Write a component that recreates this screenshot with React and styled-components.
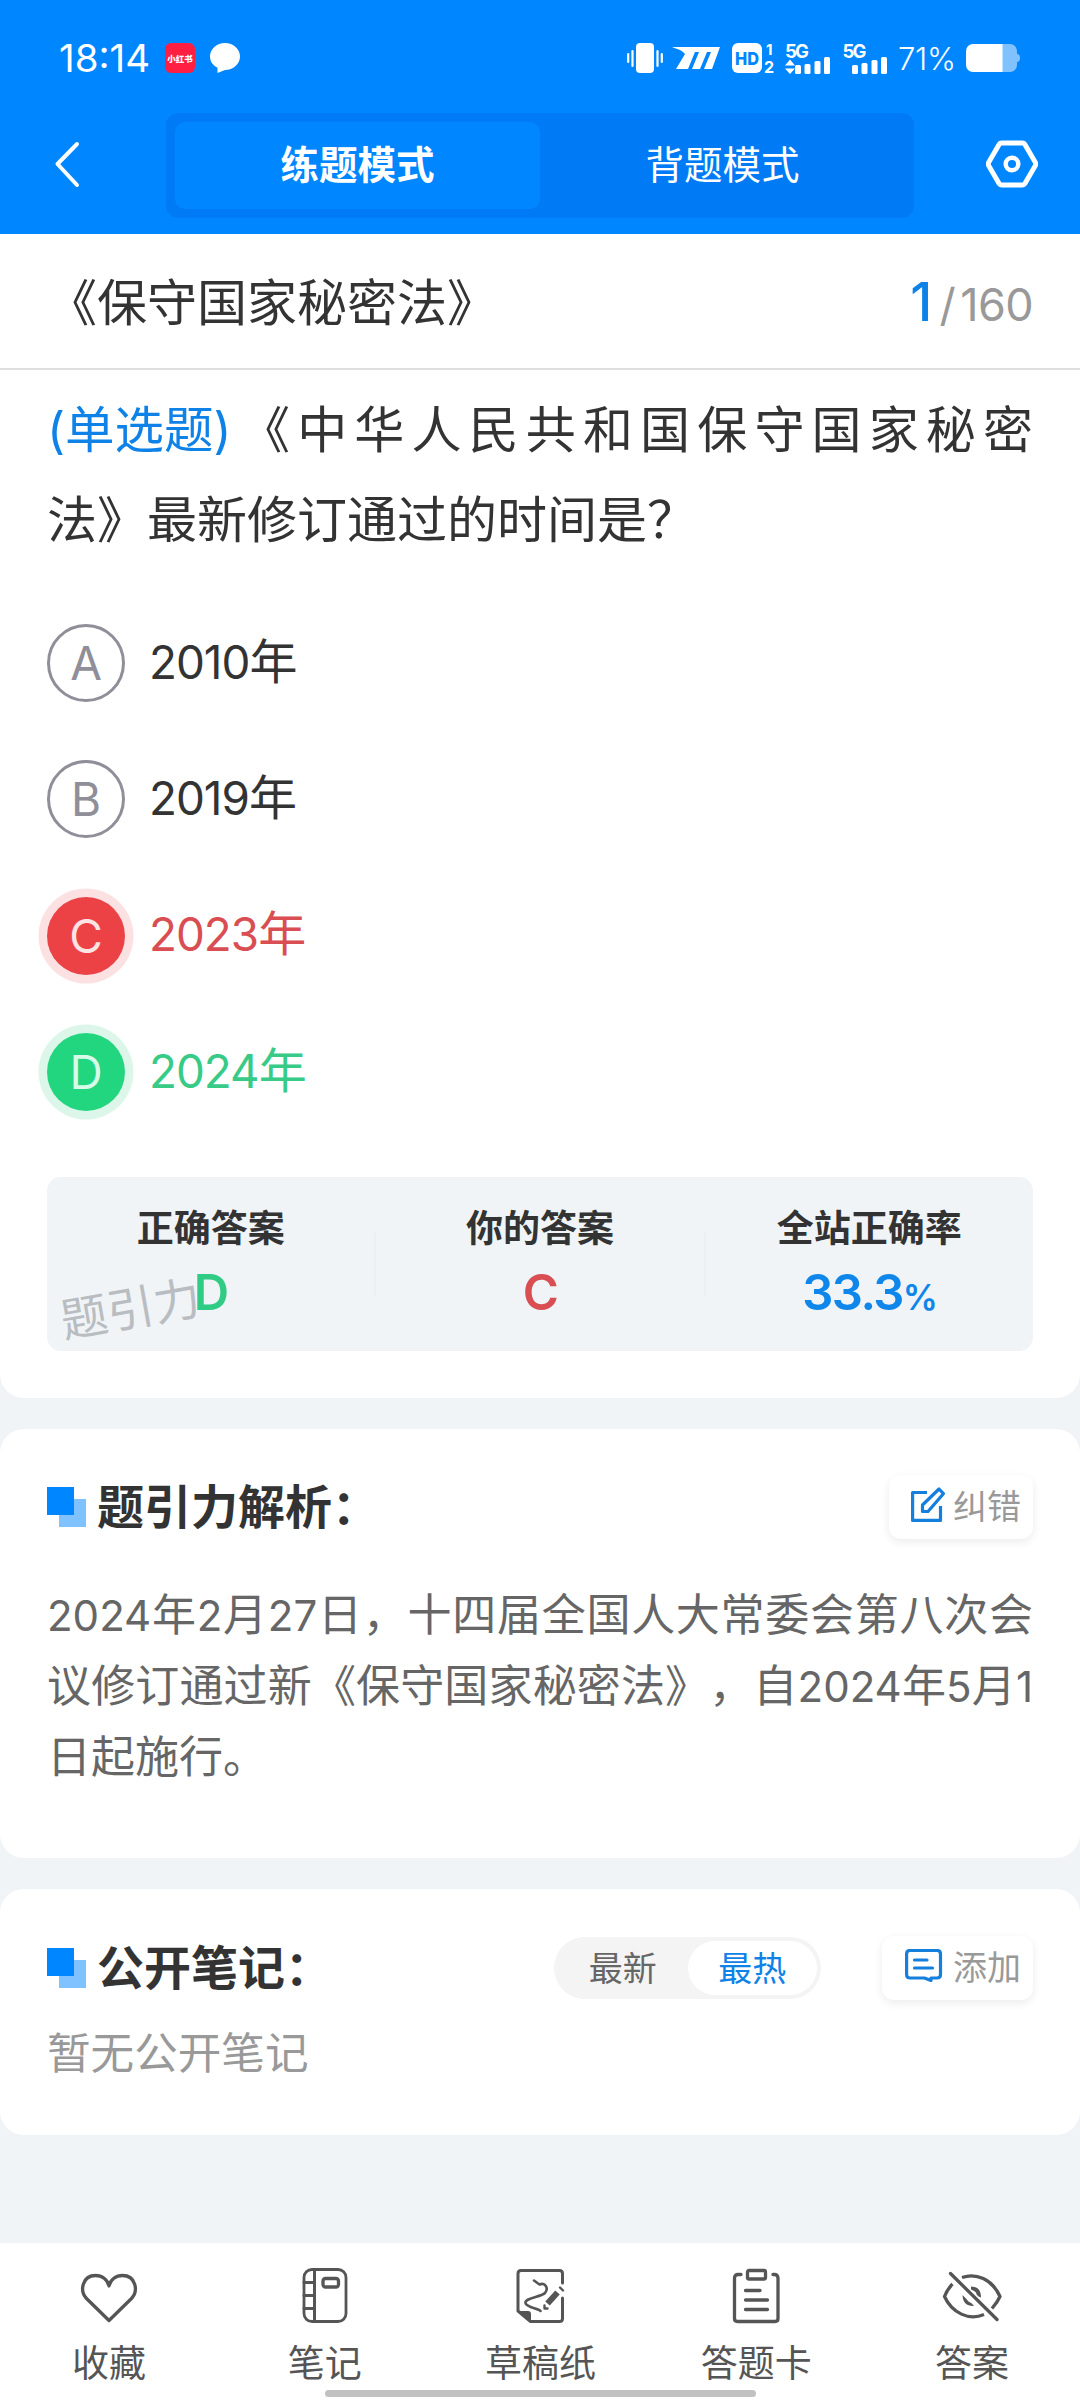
import React from "react";
import styled, { createGlobalStyle, css } from "styled-components";

const GlobalStyle = createGlobalStyle`
  * {
    box-sizing: border-box;
  }

  body {
    margin: 0;
    background: #f0f4f7;
    color: #333;
    font-family: Inter, "Noto Sans CJK SC", sans-serif;
    text-spacing-trim: space-all;
  }

  svg {
    display: block;
    flex: none;
  }
`;

const Screen = styled.div`
  width: 1080px;
  height: 2400px;
  display: flex;
  flex-direction: column;
  overflow: hidden;
`;

/* status bar */

const Header = styled.header`
  height: 234px;
  flex: none;
  background: #0086ff;
  color: white;
`;

const StatusBar = styled.div`
  height: 113px;
  padding: 3px 60px 0 59px;
  display: flex;
  align-items: center;
`;

const Clock = styled.div`
  width: 106px;
  font-size: 38.5px;
  white-space: nowrap;
`;

const AppBadge = styled.div`
  width: 30px;
  height: 30px;
  margin-right: 15px;
  border-radius: 6px;
  background: #ff1f42;
  display: flex;
  align-items: center;
  justify-content: center;
  font-size: 8.5px;
  font-weight: 900;
  white-space: nowrap;
`;

const StatusIcons = styled.div`
  margin-left: auto;
  display: flex;
  align-items: center;
`;

const BatteryText = styled.div`
  width: 78px;
  padding-left: 10px;
  font-size: 31px;
  font-weight: 300;
  letter-spacing: -0.3px;
`;

/* navigation */

const NavBar = styled.div`
  height: 105px;
  padding: 0 42px 0 50px;
  display: flex;
  align-items: center;

  > svg {
    margin-bottom: 3px;
  }
`;

const ModeSwitch = styled.div`
  width: 748px;
  height: 105px;
  margin: 0 72px 0 82px;
  padding: 9px;
  display: flex;
  border-radius: 12px;
  background: #007bf5;
`;

const Mode = styled.div`
  flex: 1;
  display: flex;
  align-items: center;
  justify-content: center;
  padding-bottom: 7px;
  border-radius: 10px;
  font-size: 38.5px;
  ${props =>
    props.$active &&
    css`
      background: #0086ff;
      font-weight: 700;
    `};
`;

/* question */

const TitleRow = styled.div`
  height: 136px;
  flex: none;
  padding: 0 47px;
  display: flex;
  align-items: center;
  justify-content: space-between;
  background: white;
  border-bottom: 2px solid #dedede;
`;

const Title = styled.h1`
  margin: 0;
  padding-bottom: 4px;
  font-size: 50px;
  font-weight: 400;
`;

const Counter = styled.div`
  padding-top: 2px;
  display: flex;
  align-items: baseline;
  color: #999;
  font-size: 45px;
  letter-spacing: -0.6px;
`;

const Current = styled.span`
  margin-right: 8px;
  color: #0f82e8;
  font-size: 53px;
  font-weight: 500;
`;

const Slash = styled.span`
  margin-right: 5px;
`;

const Card = styled.section`
  height: ${props => props.$height}px;
  flex: none;
  margin-bottom: 31px;
  padding: 0 47px;
  border-radius: ${props => (props.$first ? "0 0 24px 24px" : "24px")};
  background: white;
`;

const Question = styled.div`
  padding-top: 15px;
  font-size: 50px;
  line-height: 90px;
`;

const QuestionLine = styled.div`
  display: flex;
  white-space: nowrap;
`;

const Tag = styled.span`
  width: 193px;
  flex: none;
  color: #0f82e8;
  font-size: 49.5px;
`;

const Stretch = styled.span`
  flex: 1;
  text-align: justify;
  text-align-last: justify;
  text-justify: inter-character;
`;

const Num = styled.span`
  font-size: 0.955em;
`;

const Options = styled.div`
  padding-top: 30px;
`;

const optionColors = {
  wrong: { fill: "#ec4246", halo: "#fce1e3", text: "#d94e52", letter: "#fde3e3" },
  right: { fill: "#22d67f", halo: "#dcf7ea", text: "#38cb87", letter: "#d6fbe8" }
};

const Option = styled.div`
  height: 136.3px;
  display: flex;
  align-items: center;
  gap: 24px;
  font-size: 48px;
  color: ${props =>
    props.$state ? optionColors[props.$state].text : "#333"};
`;

const OptionLetter = styled.div`
  width: 78px;
  height: 78px;
  display: flex;
  align-items: center;
  justify-content: center;
  border-radius: 50%;
  font-size: 46px;
  border: 3px solid #8f8e99;
  color: #8f8e99;
  ${props =>
    props.$state &&
    css`
      border: none;
      background: ${optionColors[props.$state].fill};
      color: ${optionColors[props.$state].letter};
      box-shadow: 0 0 0 8.5px ${optionColors[props.$state].halo};
    `};
`;

const OptionText = styled.div`
  line-height: 70px;
  padding-bottom: 2px;
`;

const Year = styled(Num)`
  letter-spacing: -1px;
`;

/* result panel */

const Results = styled.div`
  position: relative;
  height: 174px;
  margin-top: 37px;
  display: flex;
  align-items: center;
  border-radius: 14px;
  background: #f0f4f7;
`;

const Watermark = styled.div`
  position: absolute;
  left: 13px;
  top: 97px;
  color: #b9bdc1;
  font-size: 47px;
  line-height: 70px;
  transform: rotate(-10deg);
`;

const Result = styled.div`
  position: relative;
  flex: 1;
  height: 174px;
  padding-top: 26px;
  display: flex;
  flex-direction: column;
  align-items: center;
`;

const Divider = styled.div`
  width: 2px;
  height: 64px;
  background: #ebeff3;
`;

const ResultLabel = styled.div`
  font-size: 37px;
  line-height: 52px;
  font-weight: 700;
`;

const ResultValue = styled.div`
  height: 70px;
  font-size: 49px;
  line-height: 75px;
  font-weight: 600;
  letter-spacing: -1.6px;
  color: ${props => props.$color};
`;

const Percent = styled.span`
  font-size: 35px;
`;

/* analysis and notes */

const SectionHead = styled.div`
  height: 66px;
  margin-top: ${props => props.$top}px;
  display: flex;
  align-items: center;
`;

const SectionTitle = styled.h2`
  margin: 0 auto 0 11px;
  padding-bottom: 2px;
  font-size: 47px;
  line-height: 63px;
  font-weight: 700;
`;

const SmallButton = styled.div`
  width: ${props => props.$width}px;
  height: 64px;
  padding: 0 12px 5px 0;
  display: flex;
  align-items: center;
  justify-content: flex-end;
  gap: 8px;
  border-radius: 12px;
  background: white;
  box-shadow: 0 3px 10px rgba(0, 0, 0, 0.08);
  color: #999;
  font-size: 34px;
`;

const Analysis = styled.div`
  margin-top: 40px;
  font-size: 44px;
  line-height: 70px;
  color: #666;
`;

const Line = styled.div`
  white-space: nowrap;
  ${props =>
    props.$full &&
    css`
      text-align-last: justify;
      text-justify: inter-character;
    `};
`;

const Sorter = styled.div`
  width: 267px;
  height: 62px;
  margin-right: 61px;
  padding: 4px;
  display: flex;
  border-radius: 31px;
  background: #f4f4f4;
`;

const SortTab = styled.div`
  flex: 1;
  display: flex;
  align-items: center;
  justify-content: center;
  padding-bottom: 4px;
  border-radius: 27px;
  font-size: 34px;
  background: ${props => (props.$active ? "white" : "none")};
  color: ${props => (props.$active ? "#0f82e8" : "#666")};
`;

const Empty = styled.div`
  margin-top: 20px;
  font-size: 43.6px;
  line-height: 66px;
  color: #999;
`;

/* bottom tabs */

const TabBar = styled.nav`
  position: relative;
  height: 157px;
  flex: none;
  margin-top: auto;
  padding: 22px 0 0 1px;
  display: flex;
  background: white;
`;

const Tab = styled.div`
  flex: 1;
  display: flex;
  flex-direction: column;
  align-items: center;
  color: #555;
  font-size: 37px;
  line-height: 50px;
  gap: 14px;
`;

const HomeIndicator = styled.div`
  position: absolute;
  left: 325px;
  bottom: 3px;
  width: 431px;
  height: 7px;
  border-radius: 4px;
  background: #c1c1c1;
`;

const BubbleIcon = () => (
  <svg width="30" height="30" viewBox="0 0 30 30">
    <path
      d="M15 0C6.700 0 0 6 0 13.500c0 5 3 9 7.500 11.300V30l7.500-3c8.300 0 15-6 15-13.500S23.300 0 15 0z"
      fill="white"
    />
  </svg>
);

const StatusGlyphs = () => (
  <svg width="263" height="60" viewBox="625 28 263 60" fill="white">
    <rect x="636" y="43" width="18" height="30" rx="4" />
    <path
      d="M628.200 54v8M632.500 51v15M657.500 51v15M661.800 54v8"
      stroke="white"
      strokeWidth="2.200"
      strokeLinecap="round"
    />
    <path d="M673 47h47l-8 22h-8l7-17h-4l-7 17h-8l7-17h-4l-7 17h-12l9-15c-3-4-8-5-13-7z" />
    <rect x="732" y="43" width="30" height="30" rx="6" />
    <text x="735" y="65" fontSize="18" fontWeight="800" fill="#0086ff" textLength="24" lengthAdjust="spacingAndGlyphs">
      HD
    </text>
    <text x="766" y="55" fontSize="15" fontWeight="700">
      1
    </text>
    <text x="764" y="73" fontSize="16" fontWeight="700">
      2
    </text>
    <text x="785" y="57.500" fontSize="18.500" fontWeight="700" textLength="24">
      5G
    </text>
    <path d="M790 59.500l5 6h-10zM790 74l5-5.500h-10z" />
    <rect x="795" y="65" width="6" height="9" rx="1.500" />
    <rect x="804.500" y="64" width="6" height="10" rx="1.500" />
    <rect x="814.500" y="61" width="6" height="13" rx="1.500" />
    <rect x="824" y="57" width="6" height="17" rx="1.500" />
    <text x="842.500" y="57.500" fontSize="18.500" fontWeight="700" textLength="24">
      5G
    </text>
    <rect x="852" y="65" width="6" height="9" rx="1.500" />
    <rect x="861.500" y="63" width="6" height="11" rx="1.500" />
    <rect x="871.500" y="60" width="6" height="14" rx="1.500" />
    <rect x="881" y="57" width="6" height="17" rx="1.500" />
  </svg>
);

const BatteryIcon = () => (
  <svg width="54" height="28" viewBox="0 0 54 28">
    <path d="M36 0h8a7 7 0 0 1 7 7v3q3 0 3 4t-3 4v3a7 7 0 0 1-7 7h-8z" fill="#80c2ff" />
    <path d="M7 0h29.500v28H7a7 7 0 0 1-7-7V7a7 7 0 0 1 7-7z" fill="white" />
  </svg>
);

const BackIcon = () => (
  <svg width="34" height="50" viewBox="50 140 34 50" fill="none">
    <path
      d="M77 145L57.500 165L77 186"
      stroke="white"
      strokeWidth="4"
      strokeLinecap="round"
      strokeLinejoin="round"
    />
  </svg>
);

const SettingsIcon = () => (
  <svg width="52" height="48" viewBox="0 0 52 48" fill="none" stroke="white">
    <path
      d="M15.500 3h21q1.500 0 2.300 1.300l10.500 18q.8 1.700 0 3.400l-10.500 18Q38 45 36.500 45h-21q-1.500 0-2.300-1.300l-10.500-18q-.8-1.700 0-3.400l10.500-18Q14 3 15.500 3z"
      strokeWidth="5"
    />
    <circle cx="26" cy="24" r="6.300" strokeWidth="4.500" />
  </svg>
);

const SquaresIcon = () => (
  <svg width="39" height="40" viewBox="0 0 39 40">
    <path d="M12 12h27v28H12z" fill="#80c2ff" />
    <path d="M0 0h27v28H0z" fill="#0086ff" />
  </svg>
);

const EditIcon = () => (
  <svg width="34" height="35" viewBox="0 0 34 35" fill="none" stroke="#147fdc" strokeWidth="3.200">
    <path d="M16 5.500H1.600V33.400H29.500V19" strokeLinejoin="round" />
    <path d="M28 2l4.400 4.700L17 24.500h-5.500V18z" strokeLinejoin="round" />
  </svg>
);

const NoteIcon = () => (
  <svg width="40" height="33" viewBox="0 0 40 33" fill="none" stroke="#147fdc" strokeWidth="3.200">
    <path
      d="M26 29h6q3.500 0 3.500-3.500V5q0-3.500-3.500-3.500H5Q1.600 1.500 1.600 5v20.500Q1.600 29 5 29h14.500l6.500 2.500"
      strokeLinecap="round"
      strokeLinejoin="round"
    />
    <path d="M9.500 11H22M9.500 19H27.500" strokeLinecap="round" />
  </svg>
);

const TabIcon = ({ children }) => (
  <svg
    width="62"
    height="60"
    viewBox="0 0 62 60"
    fill="none"
    stroke="#555"
    strokeWidth="3.300"
    strokeLinecap="round"
    strokeLinejoin="round"
  >
    {children}
  </svg>
);

const HeartIcon = () => (
  <TabIcon>
    <path d="M31 55.500L8.500 33.500C1.500 26 4 10.500 17.500 10.500C24 10.500 29.500 14.500 31 21C32.500 14.500 38 10.500 44.500 10.500C58 10.500 60.500 26 53.500 33.500Z" />
  </TabIcon>
);

const NotebookIcon = () => (
  <TabIcon>
    <rect x="10" y="4.500" width="42" height="52" rx="8" strokeWidth="2.800" />
    <path d="M20.500 4.500V56.500M10 17.500H20M10 30.500H20M10 43.500H20" strokeWidth="3" />
    <rect x="29" y="13.500" width="15.500" height="8.500" rx="2.500" />
  </TabIcon>
);

const DraftIcon = () => (
  <TabIcon>
    <path
      d="M9 46V8.500q0-3 3-3H50.500q3 0 3 3V18M53.500 33V53.500q0 3-3 3H21.500L9 46"
      strokeWidth="3"
    />
    <path d="M8.500 46H19q3 0 3 3v8z" fill="#555" stroke="none" />
    <path
      d="M25 15.500l5.500 4C36 17 40 23 36 28C32 32 15.500 33 16.500 38C17 42 30 44 31.500 46"
      strokeWidth="2.600"
    />
    <path d="M38.500 38.500L48.500 27.500" strokeWidth="6" strokeLinecap="butt" />
    <path d="M35.500 40.500v3h3M51 22.500l3 3" strokeWidth="2.400" />
  </TabIcon>
);

const AnswerCardIcon = () => (
  <TabIcon>
    <path d="M16 9.500H13q-3.500 0-3.500 3.500V53.500q0 3 3 3H50q3 0 3-3V13q0-3.500-3.500-3.500H48" />
    <rect x="22.500" y="5.500" width="18" height="8.500" rx="1.500" />
    <path d="M20.500 25.500H35M20.500 35H42.500M20.500 44.500H42.500" />
  </TabIcon>
);

const EyeOffIcon = () => (
  <TabIcon>
    <path
      d="M21 12.500C35 7.500 51 14 59 31.500C57 36 54 40 51 43.500M43 49.500C28 56 11 48 3.500 31.500C5.500 26.500 8.500 22 11.500 19"
      strokeLinecap="butt"
    />
    <path d="M9.500 8.500L56 54.500" />
    {/* the two halves of the pupil, either side of the slash */}
    <path d="M30 21.500Q40 21.500 40 32.500Q35.500 31 35 27.500Q33 25.500 30 24.500z" fill="#555" stroke="none" />
    <path d="M21.500 30Q22 41.500 33 41Q31.500 38 27.500 36.500Q25.500 34 21.500 30z" fill="#555" stroke="none" />
  </TabIcon>
);

const options = [
  { letter: "A", year: "2010" },
  { letter: "B", year: "2019" },
  { letter: "C", year: "2023", state: "wrong" },
  { letter: "D", year: "2024", state: "right" }
];

const tabs = [
  { label: "收藏", Icon: HeartIcon },
  { label: "笔记", Icon: NotebookIcon },
  { label: "草稿纸", Icon: DraftIcon },
  { label: "答题卡", Icon: AnswerCardIcon },
  { label: "答案", Icon: EyeOffIcon }
];

const App = () => (
  <Screen>
    <GlobalStyle />
    <Header>
      <StatusBar>
        <Clock>18:14</Clock>
        <AppBadge>小红书</AppBadge>
        <BubbleIcon />
        <StatusIcons>
          <StatusGlyphs />
          <BatteryText>71%</BatteryText>
          <BatteryIcon />
        </StatusIcons>
      </StatusBar>
      <NavBar>
        <BackIcon />
        <ModeSwitch>
          <Mode $active>练题模式</Mode>
          <Mode>背题模式</Mode>
        </ModeSwitch>
        <SettingsIcon />
      </NavBar>
    </Header>

    <TitleRow>
      <Title>《保守国家秘密法》</Title>
      <Counter>
        <Current>1</Current>
        <Slash>/</Slash>160
      </Counter>
    </TitleRow>

    <Card $height={1028} $first>
      <Question>
        <QuestionLine>
          <Tag>(单选题)</Tag>
          <Stretch>《中华人民共和国保守国家秘密</Stretch>
        </QuestionLine>
        <QuestionLine>法》最新修订通过的时间是？</QuestionLine>
      </Question>
      <Options>
        {options.map(option => (
          <Option key={option.letter} $state={option.state}>
            <OptionLetter $state={option.state}>{option.letter}</OptionLetter>
            <OptionText>
              <Year>{option.year}</Year>年
            </OptionText>
          </Option>
        ))}
      </Options>
      <Results>
        <Watermark>题引力</Watermark>
        <Result>
          <ResultLabel>正确答案</ResultLabel>
          <ResultValue $color="#30cc86">D</ResultValue>
        </Result>
        <Divider />
        <Result>
          <ResultLabel>你的答案</ResultLabel>
          <ResultValue $color="#d94e52">C</ResultValue>
        </Result>
        <Divider />
        <Result>
          <ResultLabel>全站正确率</ResultLabel>
          <ResultValue $color="#0f86ea">
            33.3<Percent>%</Percent>
          </ResultValue>
        </Result>
      </Results>
    </Card>

    <Card $height={429}>
      <SectionHead $top={45}>
        <SquaresIcon />
        <SectionTitle>题引力解析：</SectionTitle>
        <SmallButton $width={144}>
          <EditIcon />
          纠错
        </SmallButton>
      </SectionHead>
      <Analysis>
        <Line $full>
          <Num>2024</Num>年<Num>2</Num>月<Num>27</Num>
          日，十四届全国人大常委会第八次会
        </Line>
        <Line $full>
          议修订通过新《保守国家秘密法》，自<Num>2024</Num>年<Num>5</Num>月
          <Num>1</Num>
        </Line>
        <Line>日起施行。</Line>
      </Analysis>
    </Card>

    <Card $height={246}>
      <SectionHead $top={46}>
        <SquaresIcon />
        <SectionTitle>公开笔记：</SectionTitle>
        <Sorter>
          <SortTab>最新</SortTab>
          <SortTab $active>最热</SortTab>
        </Sorter>
        <SmallButton $width={151}>
          <NoteIcon />
          添加
        </SmallButton>
      </SectionHead>
      <Empty>暂无公开笔记</Empty>
    </Card>

    <TabBar>
      {tabs.map(({ label, Icon }) => (
        <Tab key={label}>
          <Icon />
          {label}
        </Tab>
      ))}
      <HomeIndicator />
    </TabBar>
  </Screen>
);

export default App;
